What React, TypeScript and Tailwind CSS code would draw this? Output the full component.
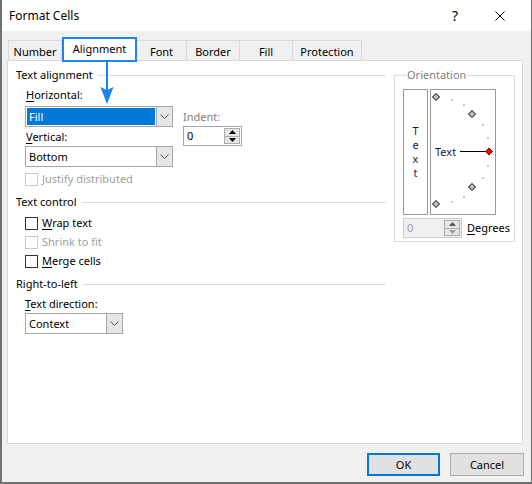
import React from 'react';

const ui = "font-['Noto_Sans',sans-serif] text-[11px] leading-[14px]";

const U = ({ children }: { children: React.ReactNode }) => (
  <span className="underline decoration-1 underline-offset-2">{children}</span>
);

const Chevron = () => (
  <svg width="9" height="5" viewBox="0 0 9 5">
    <path d="M0.5 0.5 L4.5 4.5 L8.5 0.5" fill="none" stroke="#505050" strokeWidth="1" />
  </svg>
);

const Heading = ({ label }: { label: string }) => (
  <div className="flex h-[14px] items-center">
    <span className="text-black">{label}</span>
    <div className="ml-[5px] h-px flex-1 bg-[#dcdcdc]" />
  </div>
);

const Check = ({ label, disabled }: { label: React.ReactNode; disabled?: boolean }) => (
  <div className="flex h-[14px] items-center pl-[9px]">
    <span
      className={
        disabled
          ? 'h-[13px] w-[13px] border border-[#cccccc] bg-white'
          : 'h-[13px] w-[13px] border border-[#333333] bg-white'
      }
    />
    <span className={disabled ? 'ml-[4px] text-[#a0a0a0]' : 'ml-[4px] text-black'}>{label}</span>
  </div>
);

const Select = ({ value, className, focused }: { value: string; className: string; focused?: boolean }) => (
  <div className={`flex h-[21px] border border-[#a6a6a6] bg-white ${className}`}>
    {focused ? (
      <div className="m-[1px] flex flex-1 items-center bg-[#0078d7] pl-[2px] text-white">{value}</div>
    ) : (
      <div className="flex flex-1 items-center pl-[3px] text-black">{value}</div>
    )}
    <div className="flex w-[16px] items-center justify-center border-l border-[#a6a6a6] bg-[#e6e6e6]">
      <Chevron />
    </div>
  </div>
);

const Arrow = ({ up, color }: { up?: boolean; color: string }) => (
  <svg width="7" height="4" viewBox="0 0 7 4">
    <path d={up ? 'M0 4 L3.5 0 L7 4 Z' : 'M0 0 L3.5 4 L7 0 Z'} fill={color} />
  </svg>
);

const Spin = ({ disabled }: { disabled?: boolean }) => (
  <div
    className={
      disabled
        ? 'flex h-[20px] w-[59px] shrink-0 border border-[#cccccc] bg-[#f0f0f0] p-[1px]'
        : 'flex h-[20px] w-[59px] shrink-0 border border-[#a6a6a6] bg-white p-[1px]'
    }
  >
    <div className={disabled ? 'flex flex-1 items-center pl-[2px] text-[#a0a0a0]' : 'flex flex-1 items-center pl-[2px] text-black'}>
      0
    </div>
    <div className="flex w-[16px] flex-col">
      <div className="flex flex-1 items-center justify-center border border-[#adadad] bg-[#e6e6e6]">
        <Arrow up color={disabled ? '#555555' : '#000000'} />
      </div>
      <div className="flex flex-1 items-center justify-center border border-t-0 border-[#adadad] bg-[#e6e6e6]">
        <Arrow color={disabled ? '#a0a0a0' : '#000000'} />
      </div>
    </div>
  </div>
);

const Diamond = ({ x, y, red }: { x: number; y: number; red?: boolean }) => (
  <path
    d={`M${x} ${y - 3.5} L${x + 3.5} ${y} L${x} ${y + 3.5} L${x - 3.5} ${y} Z`}
    fill={red ? '#ff0000' : '#c0c0c0'}
    stroke={red ? '#800000' : '#000000'}
    strokeWidth="1"
  />
);

const dots = [
  [21, 10],
  [33, 15],
  [52, 35],
  [57, 48],
  [57, 76],
  [52, 88],
  [33, 107],
  [21, 112],
];

const Dial = () => (
  <svg width="64" height="124" viewBox="0 0 64 124">
    {dots.map(([x, y]) => (
      <rect key={`${x}-${y}`} x={x - 1} y={y - 1} width="2" height="2" fill="#c8c8c8" />
    ))}
    <Diamond x={5} y={7} />
    <Diamond x={41} y={24} />
    <Diamond x={41} y={97} />
    <Diamond x={5} y={114} />
    <line x1="29" y1="61.5" x2="56" y2="61.5" stroke="#000000" strokeWidth="1" />
    <Diamond x={58} y={61.5} red />
    <text x="4" y="65.5" fontSize="11" fontFamily="Noto Sans, sans-serif" fill="#1a1a40">
      Text
    </text>
  </svg>
);

const tabs = [
  { label: 'Number', w: 'w-[54px] border-l' },
  { label: 'Alignment', w: 'w-[75px]', active: true },
  { label: 'Font', w: 'w-[50px]' },
  { label: 'Border', w: 'w-[53px]' },
  { label: 'Fill', w: 'w-[53px]' },
  { label: 'Protection', w: 'w-[69px]' },
];

export default function App() {
  return (
    <div className={`relative h-[484px] w-[532px] border-b-2 border-l-2 border-r border-[#707070] bg-[#f0f0f0] ${ui}`}>
      {/* title bar */}
      <div className="flex h-[31px] items-center bg-white pl-[7px] pr-[26px]">
        <span className="flex-1 text-[12px] text-black">Format Cells</span>
        <span className="text-[14px] text-black">?</span>
        <svg className="ml-[37px]" width="10" height="10" viewBox="0 0 10 10">
          <path d="M0.5 0.5 L9.5 9.5 M9.5 0.5 L0.5 9.5" stroke="#000000" strokeWidth="1" />
        </svg>
      </div>

      {/* tabs */}
      <div className="flex h-[29px] items-end pl-[6px]">
        {tabs.map((t) =>
          t.active ? (
            <div
              key={t.label}
              className="relative z-10 -mb-[2px] flex h-[25px] w-[75px] items-start justify-center border-2 border-[#1a84f0] bg-white pt-[3px] text-black"
            >
              {t.label}
            </div>
          ) : (
            <div
              key={t.label}
              className={`flex h-[20px] items-center justify-center border-r border-t border-[#d9d9d9] pt-[2px] text-black ${t.w}`}
            >
              {t.label}
            </div>
          )
        )}
      </div>

      {/* panel */}
      <div className="ml-[5px] flex h-[384px] w-[516px] border border-[#d9d9d9] bg-white pl-[8px] pr-[7px] pt-[7px]">
        <div className="w-[370px] shrink-0">
          <Heading label="Text alignment" />
          <div className="mt-[6px] flex">
            <div className="w-[157px]">
              <div className="h-[14px] pl-[10px]">
                <U>H</U>orizontal:
              </div>
              <div className="mt-[4px] pl-[9px]">
                <Select value="Fill" className="w-[148px]" focused />
              </div>
              <div className="mt-[3px] h-[14px] pl-[10px]">
                <U>V</U>ertical:
              </div>
              <div className="mt-[2px] pl-[9px]">
                <Select value="Bottom" className="w-[148px]" />
              </div>
            </div>
            <div className="ml-[10px] pt-[22px]">
              <div className="h-[14px] text-[#808080]">Indent:</div>
              <div className="mt-[2px]">
                <Spin />
              </div>
            </div>
          </div>
          <div className="mt-[5px]">
            <Check label="Justify distributed" disabled />
          </div>
          <div className="mt-[9px]">
            <Heading label="Text control" />
          </div>
          <div className="mt-[7px]">
            <Check
              label={
                <>
                  <U>W</U>rap text
                </>
              }
            />
          </div>
          <div className="mt-[5px]">
            <Check label="Shrink to fit" disabled />
          </div>
          <div className="mt-[5px]">
            <Check
              label={
                <>
                  <U>M</U>erge cells
                </>
              }
            />
          </div>
          <div className="mt-[9px]">
            <Heading label="Right-to-left" />
          </div>
          <div className="mt-[6px] h-[14px] pl-[9px]">
            <U>T</U>ext direction:
          </div>
          <div className="mt-[2px] pl-[9px]">
            <Select value="Context" className="w-[98px]" />
          </div>
        </div>

        <fieldset className="ml-[8px] h-[174px] w-[121px] min-w-0 shrink-0 border border-[#dcdcdc] px-[8px]">
          <legend className="ml-[3px] px-[1px] leading-[14px] text-[#808080]">Orientation</legend>
          <div className="mt-[7px] flex">
            <div className="flex h-[126px] w-[25px] flex-col items-center justify-center border border-[#999999] text-[#1a1a40]">
              <span className="h-[14px]">T</span>
              <span className="h-[14px]">e</span>
              <span className="h-[14px]">x</span>
              <span className="h-[14px]">t</span>
            </div>
            <div className="ml-[2px] h-[126px] w-[66px] border border-[#999999]">
              <Dial />
            </div>
          </div>
          <div className="mt-[3px] flex items-center">
            <Spin disabled />
            <span className="ml-[5px] whitespace-nowrap text-black">
              <U>D</U>egrees
            </span>
          </div>
        </fieldset>
      </div>

      {/* buttons */}
      <div className="mr-[7px] mt-[9px] flex justify-end gap-[10px]">
        <button className="flex h-[23px] w-[73px] items-center justify-center border-2 border-[#0078d7] bg-[#e1e1e1] text-black">
          OK
        </button>
        <button className="flex h-[23px] w-[74px] items-center justify-center border border-[#adadad] bg-[#e1e1e1] text-black">
          Cancel
        </button>
      </div>

      {/* annotation arrow */}
      <svg className="absolute left-[98px] top-[61px]" width="14" height="44" viewBox="0 0 14 44">
        <line x1="7" y1="0" x2="7" y2="30" stroke="#1a84f0" strokeWidth="2" />
        <path d="M0.5 26 L7 43 L13.5 26 L7 29 Z" fill="#1a84f0" />
      </svg>
    </div>
  );
}
